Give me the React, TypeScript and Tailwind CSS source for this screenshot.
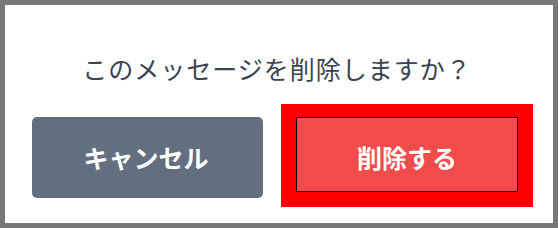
export default function App() {
  return (
    <div
      className="h-[228px] w-[558px] border-[5px] border-[#787878] bg-white"
      style={{ fontFamily: '"Noto Sans CJK JP", "Noto Sans", sans-serif' }}
    >
      <p className="mt-[46px] pr-[4px] text-center text-[25px] leading-[34px] tracking-[1px] text-[#3b4350]">
        このメッセージを削除しますか？
      </p>

      <div className="mt-[19px] flex items-start">
        <button
          type="button"
          className="ml-[27px] mt-[13px] flex h-[81px] w-[231px] items-center justify-center rounded-[5px] bg-[#636f7f] pr-[3px] text-[25px] font-bold text-white"
        >
          キャンセル
        </button>

        <div className="ml-[18px] bg-[#ff0000] pb-[15px] pl-[15px] pr-[15px] pt-[13px]">
          <button
            type="button"
            className="flex h-[75px] w-[222px] items-center justify-center border border-black bg-[#f24b4c] pt-[6px] text-[25px] font-bold text-white"
          >
            削除する
          </button>
        </div>
      </div>
    </div>
  );
}
